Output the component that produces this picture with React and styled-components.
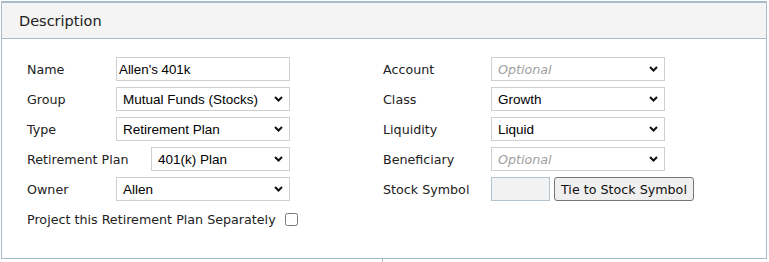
import React from "react";
import styled, { createGlobalStyle } from "styled-components";

const GlobalStyle = createGlobalStyle`
  html, body {
    margin: 0;
    padding: 0;
    background: #fff;
  }
  body {
    font-family: "DejaVu Sans", Tahoma, sans-serif;
    font-size: 12.7px;
    color: #222;
  }
`;

const Panel = styled.section`
  width: 766px;
  margin: 1px 0 0 1px;
  border-top: 2px solid #a9bbc8;
  border-left: 1px solid #a9bbc8;
  border-right: 1px solid #a9bbc8;
  border-bottom: 1px solid #a9bbc8;
  box-sizing: border-box;
`;

const Header = styled.header`
  height: 35px;
  display: flex;
  align-items: center;
  padding-left: 17px;
  background: #f4f4f4;
  border-bottom: 1px solid #a9bbc8;
  font-size: 14.5px;
  color: #222;
`;

const Body = styled.div`
  display: grid;
  grid-template-columns: 356px 1fr;
  padding: 18px 0 27px 25px;
  height: 219px;
  box-sizing: border-box;
`;

const Column = styled.div`
  display: flex;
  flex-direction: column;
  gap: 6px;
`;

const Row = styled.div`
  display: flex;
  align-items: center;
  height: 24px;
`;

const Label = styled.label`
  flex: 0 0 ${(p) => p.$w}px;
  white-space: nowrap;
`;

const TextInput = styled.input`
  width: ${(p) => p.$w}px;
  height: 24px;
  box-sizing: border-box;
  border: 1px solid ${(p) => (p.$muted ? "#b5c3cd" : "#cfcfcf")};
  padding: 1px 2px;
  font-family: "Liberation Sans", Arial, sans-serif;
  font-size: 13.333px;
  color: #000;
  background: ${(p) => (p.$muted ? "#f2f2f2" : "#fff")};
  outline: none;
`;

const SelectWrap = styled.div`
  position: relative;
  width: ${(p) => p.$w}px;
  height: 24px;
`;

const Select = styled.select`
  appearance: none;
  width: 100%;
  height: 24px;
  box-sizing: border-box;
  border: 1px solid #cfcfcf;
  border-radius: 0;
  padding: 0 20px 0 6px;
  background: #fff;
  font-family: ${(p) =>
    p.$placeholder ? `"DejaVu Sans", Tahoma, sans-serif` : `"Liberation Sans", Arial, sans-serif`};
  font-style: ${(p) => (p.$placeholder ? "italic" : "normal")};
  font-size: ${(p) => (p.$placeholder ? "12.7px" : "13.5px")};
  color: ${(p) => (p.$placeholder ? "#a0a0a0" : "#000")};
  outline: none;
`;

const Chevron = styled.svg`
  position: absolute;
  right: 7px;
  top: 9px;
  width: 9px;
  height: 6px;
  pointer-events: none;
`;

const Check = styled.input`
  width: 13px;
  height: 13px;
  margin: 0 0 0 9px;
`;

const Button = styled.button`
  height: 24px;
  margin-left: 4px;
  padding: 0 6px;
  border: 1px solid #767676;
  border-radius: 3px;
  background: #efefef;
  font-family: "DejaVu Sans", Tahoma, sans-serif;
  font-size: 12.7px;
  color: #111;
`;

const Next = styled.div`
  display: grid;
  grid-template-columns: 383px 1fr;
  height: 3px;
  div:first-child {
    border-right: 1px solid #a9bbc8;
  }
`;

const SelectField = ({ w, value, placeholder, options }) => (
  <SelectWrap $w={w}>
    <Select $placeholder={!!placeholder} defaultValue={value || ""}>
      {placeholder ? <option value="">{placeholder}</option> : null}
      {options.map((o) => (
        <option key={o}>{o}</option>
      ))}
    </Select>
    <Chevron viewBox="0 0 9 6">
      <path d="M1 1 L4.5 4.5 L8 1" fill="none" stroke="#111" strokeWidth="2" />
    </Chevron>
  </SelectWrap>
);

export default function App() {
  return (
    <>
      <GlobalStyle />
      <Panel>
        <Header>Description</Header>
        <Body>
          <Column>
            <Row>
              <Label $w={89}>Name</Label>
              <TextInput $w={174} defaultValue="Allen's 401k" />
            </Row>
            <Row>
              <Label $w={89}>Group</Label>
              <SelectField w={174} value="Mutual Funds (Stocks)" options={["Mutual Funds (Stocks)"]} />
            </Row>
            <Row>
              <Label $w={89}>Type</Label>
              <SelectField w={174} value="Retirement Plan" options={["Retirement Plan"]} />
            </Row>
            <Row>
              <Label $w={124}>Retirement Plan</Label>
              <SelectField w={139} value="401(k) Plan" options={["401(k) Plan"]} />
            </Row>
            <Row>
              <Label $w={89}>Owner</Label>
              <SelectField w={174} value="Allen" options={["Allen"]} />
            </Row>
            <Row>
              <span>Project this Retirement Plan Separately</span>
              <Check type="checkbox" />
            </Row>
          </Column>
          <Column>
            <Row>
              <Label $w={108}>Account</Label>
              <SelectField w={174} placeholder="Optional" options={[]} />
            </Row>
            <Row>
              <Label $w={108}>Class</Label>
              <SelectField w={174} value="Growth" options={["Growth"]} />
            </Row>
            <Row>
              <Label $w={108}>Liquidity</Label>
              <SelectField w={174} value="Liquid" options={["Liquid"]} />
            </Row>
            <Row>
              <Label $w={108}>Beneficiary</Label>
              <SelectField w={174} placeholder="Optional" options={[]} />
            </Row>
            <Row>
              <Label $w={108}>Stock Symbol</Label>
              <TextInput $w={59} $muted />
              <Button type="button">Tie to Stock Symbol</Button>
            </Row>
          </Column>
        </Body>
      </Panel>
      <Next>
        <div />
        <div />
      </Next>
    </>
  );
}
